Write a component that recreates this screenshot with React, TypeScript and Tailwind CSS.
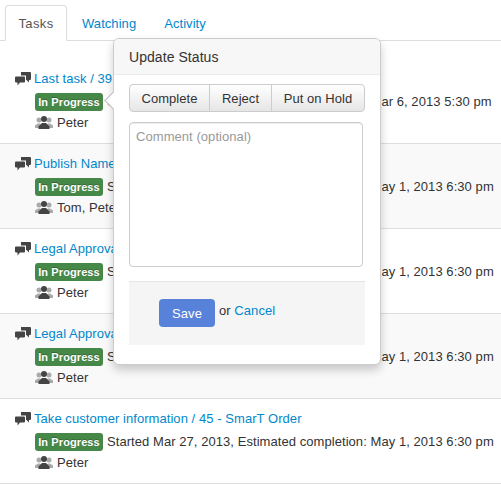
import React from 'react';

const Chat = () => (
  <svg width="16" height="14" viewBox="0 0 16 14" className="shrink-0 mt-[3px]">
    <path d="M6 0h9a1 1 0 0 1 1 1v6a1 1 0 0 1-1 1h-1v2.500L11.500 8H11V3.500H6z" fill="#444" />
    <path d="M1 4.500h8a1 1 0 0 1 1 1V9.500a1 1 0 0 1-1 1H5l-2.500 3v-3H1a1 1 0 0 1-1-1V5.500a1 1 0 0 1 1-1z" fill="#444" />
  </svg>
);

const People = () => (
  <svg width="18" height="13" viewBox="0 0 18 13" className="shrink-0">
    <circle cx="4" cy="4" r="2.500" fill="#aaa" />
    <circle cx="14" cy="4" r="2.500" fill="#aaa" />
    <path d="M0 12V9.500L3 7.500h2l2 2v2.500zM18 12V9.500L15 7.500h-2l-2 2v2.500z" fill="#aaa" />
    <circle cx="9" cy="3" r="3" fill="#444" />
    <path d="M3.500 13v-2.500L7 7h4l3.500 3.500V13z" fill="#444" />
  </svg>
);

type Row = { title: string; status: string; people: string; shade: boolean };

const rows: Row[] = [
  { title: 'Last task / 39 - SmarT Order', status: 'Started Mar 27, 2013, Estimated completion: Mar 6, 2013 5:30 pm', people: 'Peter', shade: false },
  { title: 'Publish Name - 43 - SmarT Order', status: 'Started Mar 27, 2013, Estimated completion: May 1, 2013 6:30 pm', people: 'Tom, Peter', shade: true },
  { title: 'Legal Approval / 44 - SmarT Order', status: 'Started Mar 27, 2013, Estimated completion: May 1, 2013 6:30 pm', people: 'Peter', shade: false },
  { title: 'Legal Approval / 44 - SmarT Order', status: 'Started Mar 27, 2013, Estimated completion: May 1, 2013 6:30 pm', people: 'Peter', shade: true },
  { title: 'Take customer information / 45 - SmarT Order', status: 'Started Mar 27, 2013, Estimated completion: May 1, 2013 6:30 pm', people: 'Peter', shade: false },
];

export default function App() {
  return (
    <div className="relative w-[501px] h-[484px] overflow-hidden bg-white text-[13px] leading-[20px] tracking-[0.06px] text-[#333] font-['Liberation_Sans',Arial,sans-serif]">
      {/* Tabs */}
      <div className="flex pl-[5px] pt-[5px] h-[41px] border-b border-[#ddd]">
        <div className="relative z-10 w-[62px] h-[36px] text-center pt-[8px] bg-white border border-[#ddd] border-b-white rounded-t-[4px] text-[#555] tracking-[0.4px]">Tasks</div>
        <div className="h-[36px] px-[15px] pt-[9px] text-[#0088cc]">Watching</div>
        <div className="h-[36px] pl-[13px] pt-[9px] text-[#0088cc]">Activity</div>
      </div>

      <div className="pt-[18px]">
        {rows.map((r, i) => (
          <div key={i} className={`h-[85px] pl-[15px] pt-[10px] border-b border-[#ddd] ${r.shade ? 'bg-[#f9f9f9]' : ''}`}>
            <div className="flex gap-[3px] h-[23px]">
              <Chat />
              <span className="text-[#0088cc]">{r.title}</span>
            </div>
            <div className="flex items-center pl-[20px] h-[20px] whitespace-nowrap">
              <span className="w-[68px] text-center bg-[#468847] text-white text-[11px] font-bold leading-[14px] tracking-[0.1px] py-[2px] rounded-[3px] [text-shadow:0_-1px_0_rgba(0,0,0,0.25)]">In Progress</span>
              <span className="ml-[4px]">{r.status}</span>
            </div>
            <div className="flex items-center gap-[4px] pl-[20px] h-[21px]">
              <People />
              <span>{r.people}</span>
            </div>
          </div>
        ))}
      </div>

      {/* Popover */}
      <div className="absolute z-20 left-[113px] top-[38px] w-[268px] h-[327px] bg-white border border-[#ccc] rounded-[6px] shadow-[0_5px_10px_rgba(0,0,0,0.2)]">
        <div className="absolute left-[-7px] top-[55px] w-[13px] h-[13px] rotate-45 bg-white border-l border-b border-[#bbb]" />
        <div className="relative h-[36px] bg-[#f7f7f7] border-b border-[#ebebeb] rounded-t-[5px] pl-[15px] pt-[8px] text-[14px] leading-[20px]">Update Status</div>
        <div className="relative px-[15px] pt-[9px]">
          <div className="flex w-[236px] h-[28px] rounded-[4px] border border-[#ccc] bg-gradient-to-b from-white to-[#e6e6e6] text-[#333]">
            <div className="w-[80px] pt-[1px] flex items-center justify-center border-r border-[#ccc]">Complete</div>
            <div className="w-[62px] pt-[1px] flex items-center justify-center border-r border-[#ccc]">Reject</div>
            <div className="flex-1 pt-[1px] flex items-center justify-center">Put on Hold</div>
          </div>
          <div className="mt-[10px] w-[234px] h-[145px] border border-[#ccc] rounded-[4px] px-[6px] py-[4px] text-[#999] shadow-[inset_0_1px_1px_rgba(0,0,0,0.075)]">Comment (optional)</div>
          <div className="mt-[14px] w-[236px] h-[64px] bg-[#f5f5f5] border-t border-[#e5e5e5] flex items-start pl-[30px] pt-[17px]">
            <div className="w-[56px] h-[28px] pt-[1px] rounded-[4px] bg-[#5882da] text-white flex items-center justify-center">Save</div>
            <span className="ml-[4px] mt-[2px] leading-[20px]">or <span className="text-[#0088cc]">Cancel</span></span>
          </div>
        </div>
      </div>
    </div>
  );
}
